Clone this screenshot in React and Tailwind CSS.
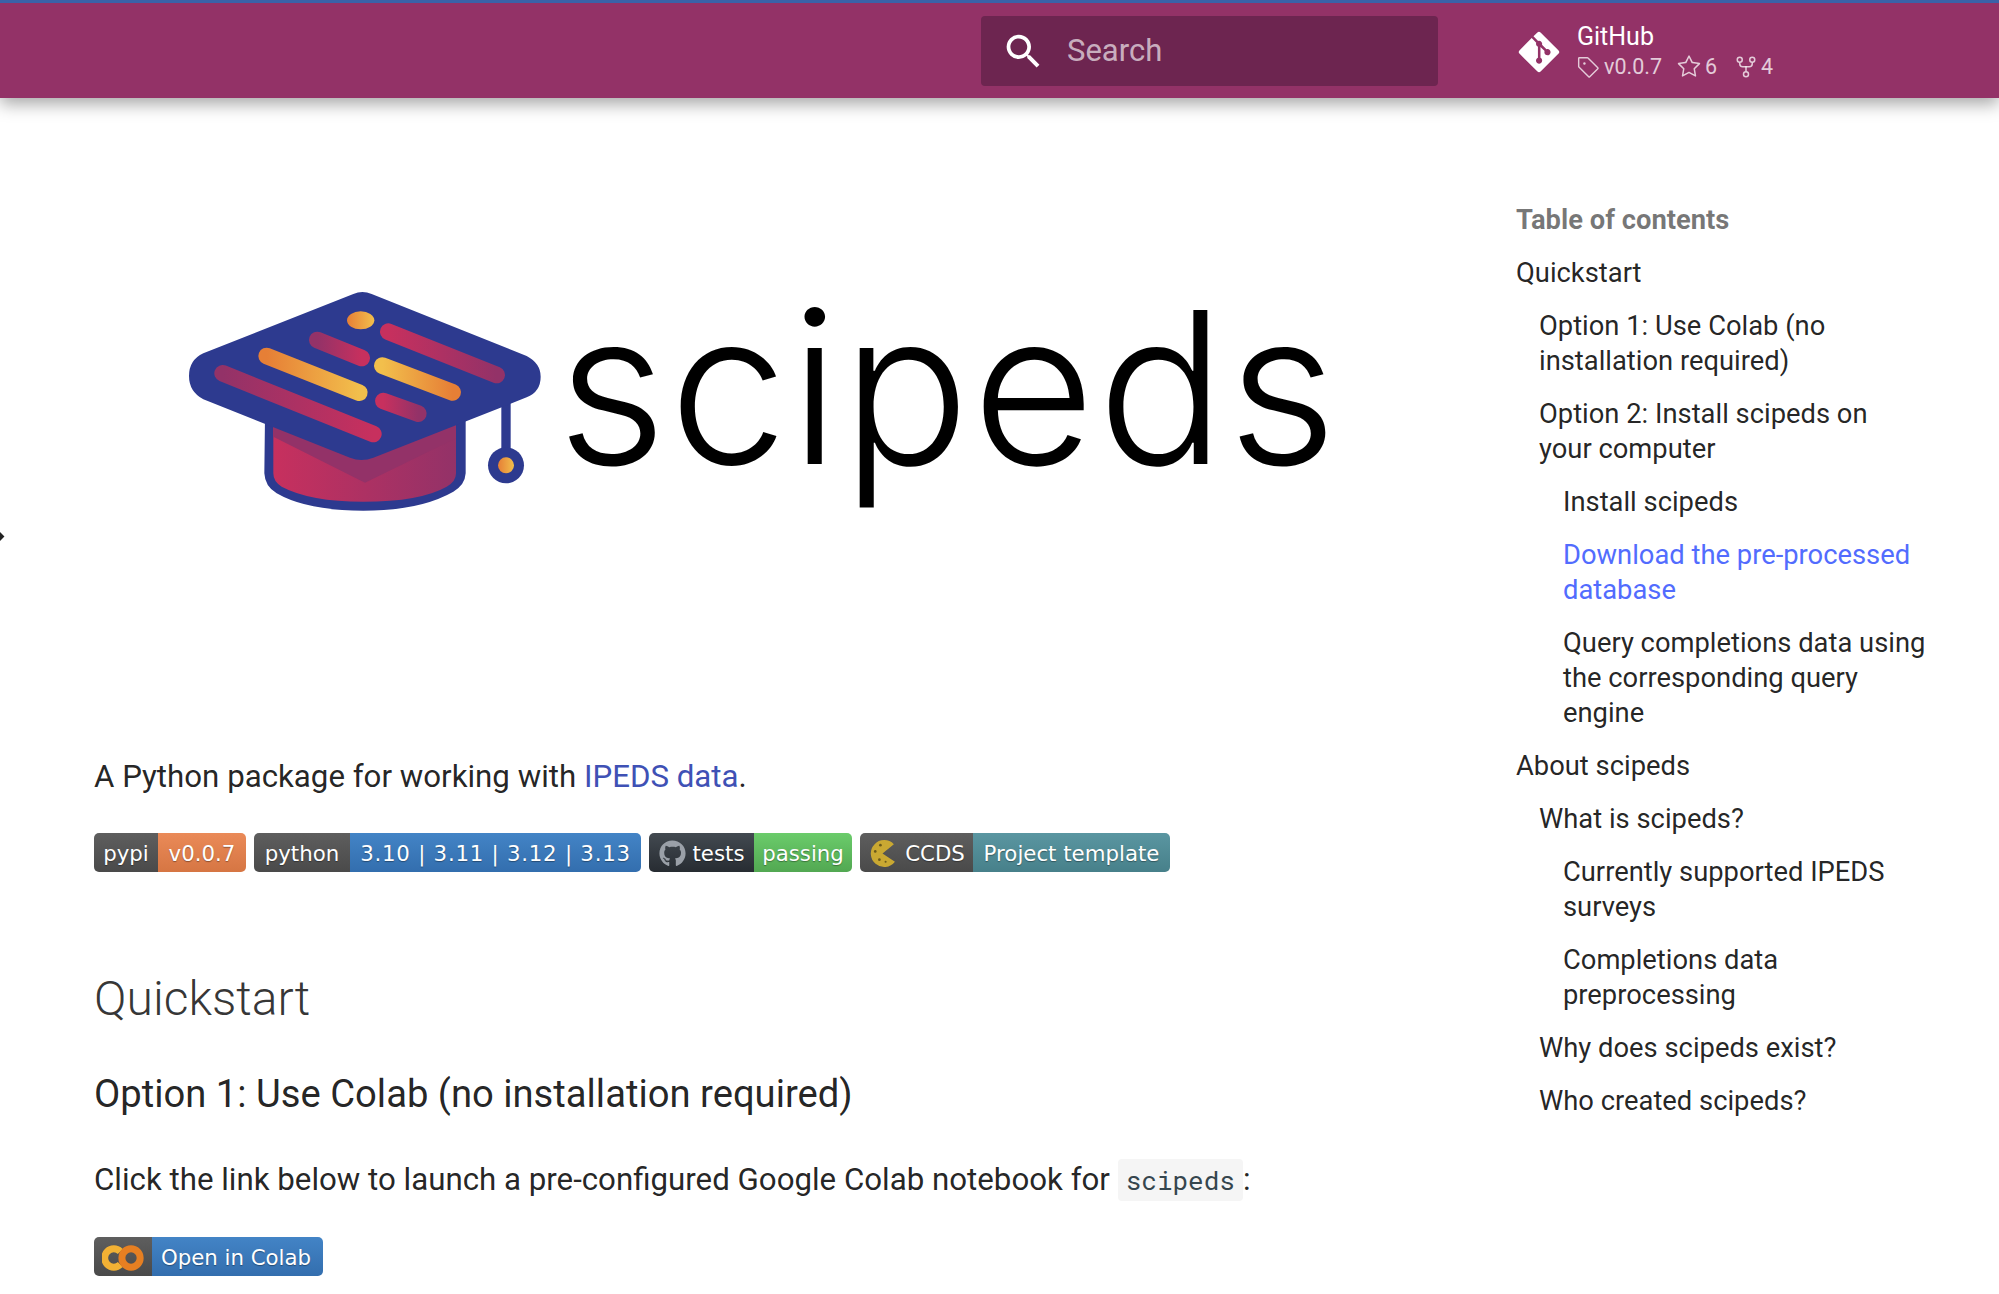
import { FaGitAlt, FaGithub } from "react-icons/fa";
import { GoTag, GoStar, GoRepoForked } from "react-icons/go";

const toc = [
  { text: "Quickstart", level: "pl-0" },
  { text: "Option 1: Use Colab (no installation required)", level: "pl-[23px]" },
  { text: "Option 2: Install scipeds on your\u00A0computer", level: "pl-[23px]" },
  { text: "Install scipeds", level: "pl-[47px]" },
  { text: "Download the pre-processed database", level: "pl-[47px]", active: true },
  { text: "Query completions data using the corresponding query engine", level: "pl-[47px]" },
  { text: "About scipeds", level: "pl-0" },
  { text: "What is scipeds?", level: "pl-[23px]" },
  { text: "Currently supported IPEDS surveys", level: "pl-[47px]" },
  { text: "Completions data preprocessing", level: "pl-[47px]" },
  { text: "Why does scipeds exist?", level: "pl-[23px]" },
  { text: "Who created scipeds?", level: "pl-[23px]" },
];

const segment =
  "flex h-full items-center justify-center whitespace-nowrap pt-[2px] [text-shadow:0_1px_1px_rgba(0,0,0,0.35)]";

function Badge({ className = "", children }) {
  return (
    <div
      className={`flex h-[39px] overflow-hidden rounded-[5px] font-['DejaVu_Sans',sans-serif] text-[21.3px] text-white ${className}`}
    >
      {children}
    </div>
  );
}

function CapLogo() {
  const stripes = [
    { x1: 188, y1: 310, x2: 640, y2: 492, stroke: "url(#purpleRed)" },
    { x1: 320, y1: 258, x2: 598, y2: 368, stroke: "url(#orangeGold)" },
    { x1: 472, y1: 210, x2: 605, y2: 264, stroke: "url(#purpleRed)" },
    { x1: 685, y1: 185, x2: 1010, y2: 315, stroke: "url(#redPurple)" },
    { x1: 667, y1: 287, x2: 878, y2: 367, stroke: "url(#goldOrange)" },
    { x1: 670, y1: 393, x2: 775, y2: 431, stroke: "url(#redPurple)" },
  ];
  return (
    <svg viewBox="0 0 1200 780" className="h-[260px] w-[400px] shrink-0">
      <defs>
        <linearGradient id="purpleRed" x1="0" y1="0" x2="1" y2="0">
          <stop offset="0" stopColor="#933268" />
          <stop offset="1" stopColor="#c7305e" />
        </linearGradient>
        <linearGradient id="redPurple" x1="0" y1="0" x2="1" y2="0">
          <stop offset="0" stopColor="#c7305e" />
          <stop offset="1" stopColor="#933268" />
        </linearGradient>
        <linearGradient id="orangeGold" x1="0" y1="0" x2="1" y2="0">
          <stop offset="0" stopColor="#e67f36" />
          <stop offset="1" stopColor="#f2bf4c" />
        </linearGradient>
        <linearGradient id="goldOrange" x1="0" y1="0" x2="1" y2="0">
          <stop offset="0" stopColor="#f2bf4c" />
          <stop offset="1" stopColor="#e67f36" />
        </linearGradient>
      </defs>
      <path
        d="M315 440 L313 610 Q315 650 350 670 Q440 722 610 722 Q780 722 880 665 Q915 645 917 610 L917 440 Z"
        fill="#2d3a8f"
      />
      <path
        d="M340 460 L340 610 Q340 635 365 650 Q450 695 610 695 Q780 695 860 650 Q888 635 888 610 L888 460 Z"
        fill="url(#redPurple)"
      />
      <path d="M340 470 L340 500 L615 638 L888 505 L888 460 L610 570 Z" fill="#933268" />
      <rect x="1024" y="390" width="28" height="150" fill="#2d3a8f" />
      <circle cx="1038" cy="586" r="54" fill="#2d3a8f" />
      <circle cx="1038" cy="586" r="24" fill="url(#orangeGold)" />
      <path
        d="M580 72 Q607 60 635 72 L1100 258 Q1142 280 1142 320 Q1142 365 1100 382 L640 563 Q605 577 570 563 L130 388 Q87 365 87 318 Q87 270 130 250 Z"
        fill="#2d3a8f"
      />
      {stripes.map((s) => (
        <line
          key={s.x1}
          x1={s.x1}
          y1={s.y1}
          x2={s.x2}
          y2={s.y2}
          stroke={s.stroke}
          strokeWidth="50"
          strokeLinecap="round"
        />
      ))}
      <ellipse cx="602" cy="151" rx="41" ry="27" fill="url(#orangeGold)" />
    </svg>
  );
}

function CookieIcon() {
  return (
    <svg viewBox="0 0 28 28" className="h-[29px] w-[29px]">
      <path d="M25 5 A13 13 0 1 0 26 22 L14 14 Z" fill="#c9a832" />
      <circle cx="12" cy="6" r="1.3" fill="#6b5a1c" />
      <circle cx="7" cy="12" r="1.3" fill="#6b5a1c" />
      <circle cx="11" cy="20" r="1.3" fill="#6b5a1c" />
      <circle cx="17" cy="22" r="1" fill="#6b5a1c" />
    </svg>
  );
}

function ColabIcon() {
  return (
    <svg viewBox="0 0 40 24" className="h-[26px] w-[43px]" fill="none" strokeWidth="6.5">
      <path d="M17 6 A8.5 8.5 0 1 0 17 18" stroke="#f2b134" />
      <circle cx="27" cy="12" r="8.5" stroke="#e67f22" />
    </svg>
  );
}

export default function App() {
  return (
    <div className="relative h-[1294px] overflow-hidden bg-white font-['Roboto',sans-serif] text-[#000000de]">
      {/* Header */}
      <header className="relative flex h-[98px] items-start border-t-[3px] border-[#3a62a8] bg-[#933267] shadow-[0_6px_16px_rgba(0,0,0,0.35)]">
        <div className="ml-[981px] mt-[13px] flex h-[70px] w-[457px] items-center rounded-[4px] bg-[#6d2550] pl-[20px]">
          <svg viewBox="0 0 24 24" className="h-[45px] w-[45px]" fill="white">
            <path d="M9.5 3A6.5 6.5 0 0 1 16 9.5c0 1.61-.59 3.09-1.56 4.23l.27.27h.79l5 5-1.5 1.5-5-5v-.79l-.27-.27A6.516 6.516 0 0 1 9.5 16 6.5 6.5 0 0 1 3 9.5 6.5 6.5 0 0 1 9.5 3m0 2C7 5 5 7 5 9.5S7 14 9.5 14 14 12 14 9.5 12 5 9.5 5Z" />
          </svg>
          <span className="ml-[21px] text-[31px] text-[#ffffffa6]">Search</span>
        </div>
        <div className="ml-[78px] mt-[20px] flex items-center text-white">
          <FaGitAlt className="h-[46px] w-[46px]" />
          <div className="ml-[15px] flex flex-col">
            <span className="text-[25px] leading-[28px]">GitHub</span>
            <div className="mt-[3px] flex items-center text-[21.5px] leading-[26px] text-[#ffffffbf]">
              <GoTag className="h-[23px] w-[23px]" />
              <span className="ml-[4px]">v0.0.7</span>
              <GoStar className="ml-[15px] h-[24px] w-[24px]" />
              <span className="ml-[4px]">6</span>
              <GoRepoForked className="ml-[17px] h-[24px] w-[24px]" />
              <span className="ml-[3px]">4</span>
            </div>
          </div>
        </div>
      </header>

      {/* Stray pointer at the window edge */}
      <div className="absolute left-[-4px] top-[533px] h-[7px] w-[7px] rotate-45 bg-[#222222]" />

      <div className="flex">
        {/* Article */}
        <main className="w-[1516px] shrink-0 pl-[94px]">
          <div className="ml-[66px] mt-[172px] flex h-[260px] items-start">
            <CapLogo />
            <span className="ml-[-3px] mt-[-33px] font-['Inter',sans-serif] text-[212px] font-[350] leading-[300px] tracking-[2.5px] text-black">
              scipeds
            </span>
          </div>

          <p className="mt-[227px] text-[31.25px] leading-[40px]">
            A Python package for working with{" "}
            <span className="text-[#3f51b5]">IPEDS data</span>.
          </p>

          <div className="mt-[36px] flex gap-[8px]">
            <Badge>
              <div className={`${segment} w-[64px] bg-linear-to-b from-[#5e5e5e] to-[#4a4a4a]`}>pypi</div>
              <div className={`${segment} w-[88px] bg-linear-to-b from-[#ea8a58] to-[#d67643]`}>v0.0.7</div>
            </Badge>
            <Badge>
              <div className={`${segment} w-[96px] bg-linear-to-b from-[#5e5e5e] to-[#4a4a4a]`}>python</div>
              <div className={`${segment} w-[291px] bg-linear-to-b from-[#4384c6] to-[#336eae] tracking-[0.75px]`}>
                3.10 | 3.11 | 3.12 | 3.13
              </div>
            </Badge>
            <Badge>
              <div className={`${segment} w-[105px] gap-[7px] bg-linear-to-b from-[#434a51] to-[#272c32]`}>
                <FaGithub className="h-[27px] w-[27px] text-[#9aa0a8]" />
                tests
              </div>
              <div className={`${segment} w-[98px] bg-linear-to-b from-[#6bcc6b] to-[#52a852]`}>passing</div>
            </Badge>
            <Badge>
              <div className={`${segment} w-[113px] gap-[8px] bg-linear-to-b from-[#5e5e5e] to-[#4a4a4a]`}>
                <CookieIcon />
                CCDS
              </div>
              <div className={`${segment} w-[197px] bg-linear-to-b from-[#5a96a1] to-[#47808a]`}>
                Project template
              </div>
            </Badge>
          </div>

          <h1 className="mt-[99px] text-[48px] font-light leading-[56px] text-[#000000cc]">Quickstart</h1>
          <h2 className="mt-[43px] text-[38.2px] leading-[48px]">
            Option 1: Use Colab (no installation required)
          </h2>
          <p className="mt-[42px] text-[31.25px] leading-[40px]">
            Click the link below to launch a pre-configured Google Colab notebook for{" "}
            <code className="rounded-[4px] bg-[#f5f5f5] px-[8px] py-[4px] font-['Roboto_Mono','DejaVu_Sans_Mono',monospace] text-[26px] text-[#36464e]">
              scipeds
            </code>
            :
          </p>

          <Badge className="mt-[37px] w-fit">
            <div className={`${segment} w-[58px] bg-linear-to-b from-[#5e5e5e] to-[#4a4a4a]`}>
              <ColabIcon />
            </div>
            <div className={`${segment} w-[171px] pr-[3px] bg-linear-to-b from-[#4384c6] to-[#336eae]`}>Open in Colab</div>
          </Badge>
        </main>

        {/* Table of contents */}
        <aside className="mt-[105px] w-[420px] text-[27.35px] leading-[35px]">
          <div className="font-bold text-[#0000008a]">Table of contents</div>
          <ul className="mt-[18px] flex flex-col gap-[18px]">
            {toc.map((item) => (
              <li
                key={item.text}
                className={`${item.level} max-w-[410px] ${item.active ? "text-[#526cfe]" : ""}`}
              >
                {item.text}
              </li>
            ))}
          </ul>
        </aside>
      </div>
    </div>
  );
}
